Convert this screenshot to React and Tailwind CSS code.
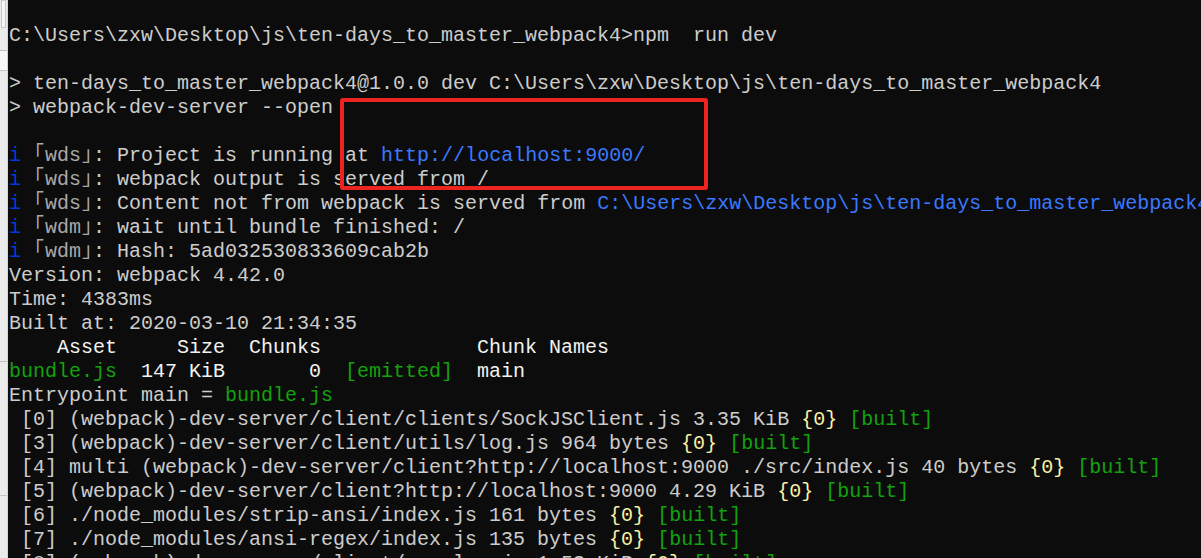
import React from "react";

const FG = "text-[#cccccc]";
const BRIGHT = "text-[#f2f2f2]";
const INFO = "text-[#0037da]";
const LINK = "text-[#3b78ff]";
const GREEN = "text-[#13a10e]";
const YELLOW = "text-[#f9f1a5]";
const DIM = "text-[#a8a8a8]";

// one logger prefix:  i ｢wds｣:
function prefix(name) {
    return [
        ["i", INFO],
        [" ", FG],
        ["｢", DIM, true],
        [name, DIM],
        ["｣", DIM, true],
        [": ", FG],
    ];
}

function built(before, size) {
    return [
        [before + " " + size + " ", FG],
        ["{0}", YELLOW],
        [" ", FG],
        ["[built]", GREEN],
    ];
}

const lines = [
    [["C:\\Users\\zxw\\Desktop\\js\\ten-days_to_master_webpack4>npm  run dev", FG]],
    [],
    [["> ten-days_to_master_webpack4@1.0.0 dev C:\\Users\\zxw\\Desktop\\js\\ten-days_to_master_webpack4", FG]],
    [["> webpack-dev-server --open", FG]],
    [],
    [...prefix("wds"), ["Project is running at ", FG], ["http://localhost:9000/", LINK]],
    [...prefix("wds"), ["webpack output is served from /", FG]],
    [
        ...prefix("wds"),
        ["Content not from webpack is served from ", FG],
        ["C:\\Users\\zxw\\Desktop\\js\\ten-days_to_master_webpack4", LINK],
    ],
    [...prefix("wdm"), ["wait until bundle finished: /", FG]],
    [...prefix("wdm"), ["Hash: 5ad032530833609cab2b", FG]],
    [["Version: webpack 4.42.0", FG]],
    [["Time: 4383ms", FG]],
    [["Built at: 2020-03-10 21:34:35", FG]],
    [["    Asset     Size  Chunks             Chunk Names", BRIGHT]],
    [
        ["bundle.js", GREEN],
        ["  147 KiB       0  ", BRIGHT],
        ["[emitted]", GREEN],
        ["  main", BRIGHT],
    ],
    [["Entrypoint main = ", FG], ["bundle.js", GREEN]],
    built(" [0] (webpack)-dev-server/client/clients/SockJSClient.js", "3.35 KiB"),
    built(" [3] (webpack)-dev-server/client/utils/log.js", "964 bytes"),
    built(" [4] multi (webpack)-dev-server/client?http://localhost:9000 ./src/index.js", "40 bytes"),
    built(" [5] (webpack)-dev-server/client?http://localhost:9000", "4.29 KiB"),
    built(" [6] ./node_modules/strip-ansi/index.js", "161 bytes"),
    built(" [7] ./node_modules/ansi-regex/index.js", "135 bytes"),
    built(" [8] (webpack)-dev-server/client/overlay.js", "1.53 KiB"),
];

function Line({ parts }) {
    return (
        <div className="h-[24px] leading-[24px] whitespace-pre">
            {parts.length === 0 ? " " : null}
            {parts.map(([text, color, cell], i) =>
                cell ? (
                    <span key={i} className={color + " inline-block w-[12px] text-center"}>
                        {text}
                    </span>
                ) : (
                    <span key={i} className={color}>
                        {text}
                    </span>
                )
            )}
        </div>
    );
}

export default function App() {
    return (
        <div className="w-[1201px] h-[558px] overflow-hidden flex bg-[#0c0c0c]">
            {/*window edge*/}
            <div className="w-[8px] shrink-0 flex flex-col bg-[#ebebeb] border-r border-[#d4d4d4]">
                <div className="h-[28px] mx-[1px] border border-[#c9c9c9] bg-[#f6f6f6]" />
                <div className="h-[22px]" />
                <div className="h-px bg-[#bdbdbd]" />
                <div className="h-[19px] bg-[#f7f7f7]" />
                <div className="h-px bg-[#c4c4c4]" />
                <div className="h-[290px]" />
                <div className="h-px bg-[#bdbdbd]" />
                <div className="h-[133px]" />
                <div className="h-px bg-[#c4c4c4]" />
            </div>

            {/*console*/}
            <div
                className="relative flex-1 pt-[24px] pl-[1px] text-[20px]"
                style={{ fontFamily: '"Liberation Mono", "Noto Sans CJK SC", monospace' }}
            >
                {lines.map((parts, i) => (
                    <Line key={i} parts={parts} />
                ))}

                {/*red mark*/}
                <div className="absolute left-[332px] top-[98px] w-[368px] h-[92px] border-4 border-[#ec2420] rounded-[3px]" />
            </div>
        </div>
    );
}
